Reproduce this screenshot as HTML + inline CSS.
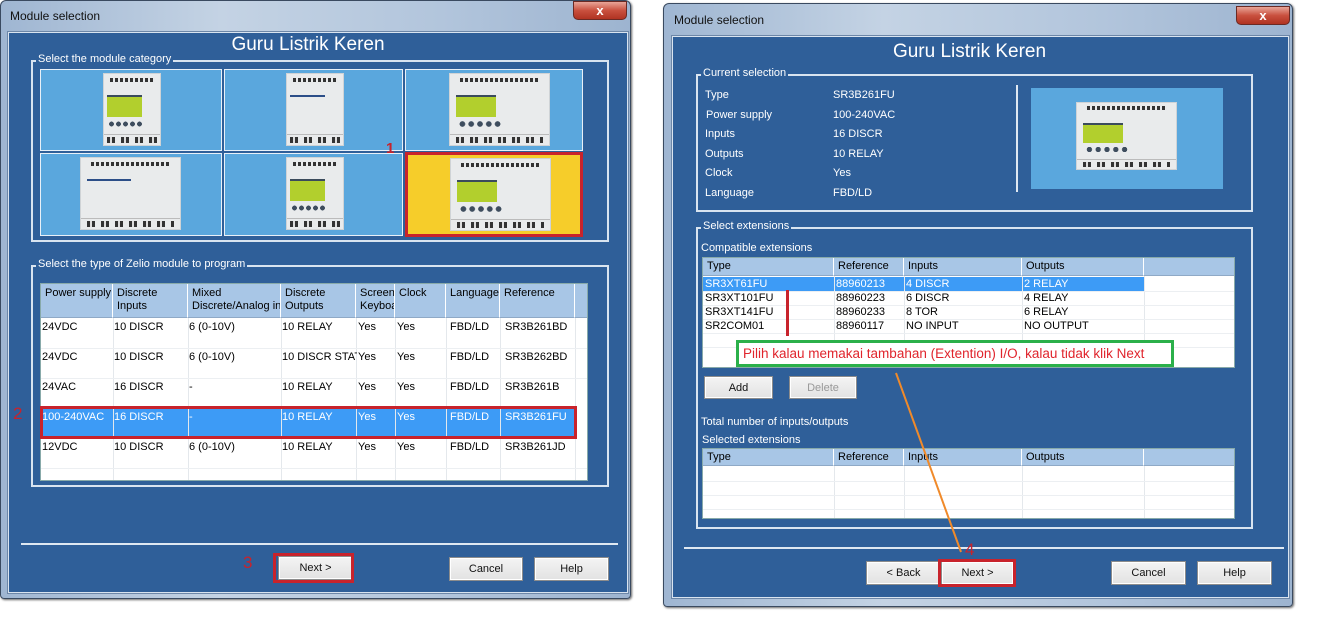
<!DOCTYPE html>
<html><head><meta charset="utf-8">
<style>
*{box-sizing:border-box;margin:0;padding:0}
body{width:1318px;height:636px;background:#fff;position:relative;overflow:hidden;font-family:"Liberation Sans",Arial,sans-serif;font-size:11px;color:#000}
.a{position:absolute}
.win{position:absolute;background:linear-gradient(90deg,#9fb6d2,#c4d3e4 35%,#b2c5dc 70%,#9db4d0);border:1px solid #3a4a60;border-radius:6px 6px 4px 4px;box-shadow:1px 1px 2px #666}
.panel{position:absolute;background:#2f5f99;border:1px solid #d9e4f0;outline:1px solid #6d87a8}
.wt{position:absolute;font-size:12px;color:#111}
.close{position:absolute;width:54px;height:19px;border:1px solid #6b2a24;border-radius:0 0 5px 5px;background:linear-gradient(#e8a598,#c9503e 50%,#b03322);color:#fff;font-weight:bold;text-align:center;font-size:13px;line-height:17px}
.h1{position:absolute;color:#fff;font-size:19px;text-align:center}
.grp{position:absolute;border:2px solid #d9e4f0}
.gl{position:absolute;color:#fff;font-size:11px;background:#2f5f99;padding:0 2px;top:-9px;left:3px;white-space:nowrap}
.tile{position:absolute;background:#5aa7dd;border:1px solid #e8f0f8}
.dev{position:absolute;background:#e9ebec;border:1px solid #cfd3d6}
.dev .dots{position:absolute;left:10%;top:5%;right:10%;height:6%;background:repeating-linear-gradient(90deg,#333 0 3px,transparent 3px 5px)}
.dev .lcd{position:absolute;left:6%;top:30%;width:62%;height:30%;background:#b2cf2d;border-top:2px solid #3b4b5c}
.dev .btns{position:absolute;left:8%;top:66%;width:62%;height:9%;background:radial-gradient(circle,#3e4d5e 50%,transparent 55%) 0 0/20% 100% repeat-x}
.dev .term{position:absolute;left:6%;right:6%;bottom:3%;height:8%;background:repeating-linear-gradient(90deg,#333 0 3px,#ddd 3px 5px,#333 5px 8px,transparent 8px 14px)}
.dev .strip{position:absolute;left:0;right:0;top:85%;height:1px;background:#bbb}
.tbl{position:absolute;background:#fff;border:1px solid #8aa;overflow:hidden}
.hd{position:absolute;background:#a8c6e6;border-right:1px solid #fff;border-bottom:1px solid #8fa9c6;padding:3px 4px;font-size:11px;line-height:13px;overflow:hidden;white-space:nowrap}
.c{position:absolute;font-size:11px;white-space:nowrap;overflow:hidden;line-height:14px}
.vl{position:absolute;width:1px;background:#e4e8ec}
.hl{position:absolute;height:1px;background:#eceff2}
.btn{position:absolute;background:linear-gradient(#f4f4f4,#e2e2e2);border:1px solid #8c8c8c;box-shadow:inset 0 0 0 1px #fff;text-align:center;font-size:11px;line-height:22px;color:#111}
.red{position:absolute;border:3px solid #c8232c}
.num{position:absolute;color:#c8232c;font-size:15px;font-weight:bold}
.w{color:#fff;position:absolute;font-size:11px}
</style></head><body>

<!-- LEFT WINDOW -->
<div class="win" style="left:0;top:0;width:631px;height:599px"></div>
<div class="wt" style="left:10px;top:9px">Module selection</div>
<div class="close" style="left:573px;top:1px">x</div>
<div class="panel" style="left:8px;top:32px;width:620px;height:561px"></div>
<div class="h1" style="left:8px;top:34px;width:600px">Guru Listrik Keren</div>

<div class="grp" style="left:31px;top:60px;width:578px;height:182px"><div class="gl">Select the module category</div></div>
<div class="tile" style="left:40px;top:69px;width:182px;height:82px"></div>
<div class="tile" style="left:224px;top:69px;width:179px;height:82px"></div>
<div class="tile" style="left:405px;top:69px;width:178px;height:82px"></div>
<div class="tile" style="left:40px;top:153px;width:182px;height:83px"></div>
<div class="tile" style="left:224px;top:153px;width:179px;height:83px"></div>
<div class="tile" style="left:405px;top:152px;width:178px;height:85px;background:#f6cd2a;border:3px solid #c8232c"></div>

<div class="dev" style="left:103px;top:73px;width:58px;height:73px"><div class="dots"></div><div class="lcd"></div><div class="btns"></div><div class="strip"></div><div class="term"></div></div>
<div class="dev" style="left:286px;top:73px;width:58px;height:73px"><div class="dots"></div><div class="lcd" style="background:#e9ebec;height:3%;border-top:2px solid #2c4e88"></div><div class="strip"></div><div class="term"></div></div>
<div class="dev" style="left:449px;top:73px;width:101px;height:73px"><div class="dots"></div><div class="lcd" style="width:40%"></div><div class="btns" style="width:45%"></div><div class="strip"></div><div class="term"></div></div>
<div class="dev" style="left:80px;top:157px;width:101px;height:73px"><div class="dots"></div><div class="lcd" style="background:#e9ebec;height:3%;width:45%;border-top:2px solid #2c4e88"></div><div class="strip"></div><div class="term"></div></div>
<div class="dev" style="left:286px;top:157px;width:58px;height:73px"><div class="dots"></div><div class="lcd"></div><div class="btns"></div><div class="strip"></div><div class="term"></div></div>
<div class="dev" style="left:450px;top:158px;width:101px;height:73px"><div class="dots"></div><div class="lcd" style="width:40%"></div><div class="btns" style="width:45%"></div><div class="strip"></div><div class="term"></div></div>
<div class="num" style="left:386px;top:140px">1</div>

<div class="grp" style="left:31px;top:265px;width:578px;height:222px"><div class="gl">Select the type of Zelio module to program</div></div>
<div class="tbl" style="left:40px;top:283px;width:548px;height:198px">
  <div class="hd" style="left:0;top:0;width:72px;height:34px">Power supply</div>
  <div class="hd" style="left:72px;top:0;width:75px;height:34px">Discrete<br>Inputs</div>
  <div class="hd" style="left:147px;top:0;width:93px;height:34px">Mixed<br>Discrete/Analog in</div>
  <div class="hd" style="left:240px;top:0;width:75px;height:34px">Discrete<br>Outputs</div>
  <div class="hd" style="left:315px;top:0;width:39px;height:34px">Screen<br>Keyboard</div>
  <div class="hd" style="left:354px;top:0;width:51px;height:34px">Clock</div>
  <div class="hd" style="left:405px;top:0;width:54px;height:34px">Language</div>
  <div class="hd" style="left:459px;top:0;width:75px;height:34px">Reference</div>
  <div class="hd" style="left:534px;top:0;width:14px;height:34px"></div>
  <div class="a" style="left:0;top:124px;width:534px;height:30px;background:#3d9bf6"></div>
  <div class="vl" style="left:72px;top:34px;height:164px"></div><div class="vl" style="left:147px;top:34px;height:164px"></div><div class="vl" style="left:240px;top:34px;height:164px"></div><div class="vl" style="left:315px;top:34px;height:164px"></div><div class="vl" style="left:354px;top:34px;height:164px"></div><div class="vl" style="left:405px;top:34px;height:164px"></div><div class="vl" style="left:459px;top:34px;height:164px"></div><div class="vl" style="left:534px;top:34px;height:164px"></div>
  <div class="hl" style="left:0;top:64px;width:548px"></div><div class="hl" style="left:0;top:94px;width:548px"></div><div class="hl" style="left:0;top:184px;width:548px"></div>
</div>
<div class="a" style="left:42px;top:320px;width:560px">
  <div class="c" style="left:0;top:0">24VDC</div><div class="c" style="left:72px;top:0">10 DISCR</div><div class="c" style="left:147px;top:0">6 (0-10V)</div><div class="c" style="left:240px;top:0">10 RELAY</div><div class="c" style="left:316px;top:0">Yes</div><div class="c" style="left:355px;top:0">Yes</div><div class="c" style="left:408px;top:0">FBD/LD</div><div class="c" style="left:463px;top:0">SR3B261BD</div>
  <div class="c" style="left:0;top:30px">24VDC</div><div class="c" style="left:72px;top:30px">10 DISCR</div><div class="c" style="left:147px;top:30px">6 (0-10V)</div><div class="c" style="left:240px;top:30px;width:75px">10 DISCR STAT</div><div class="c" style="left:316px;top:30px">Yes</div><div class="c" style="left:355px;top:30px">Yes</div><div class="c" style="left:408px;top:30px">FBD/LD</div><div class="c" style="left:463px;top:30px">SR3B262BD</div>
  <div class="c" style="left:0;top:60px">24VAC</div><div class="c" style="left:72px;top:60px">16 DISCR</div><div class="c" style="left:147px;top:60px">-</div><div class="c" style="left:240px;top:60px">10 RELAY</div><div class="c" style="left:316px;top:60px">Yes</div><div class="c" style="left:355px;top:60px">Yes</div><div class="c" style="left:408px;top:60px">FBD/LD</div><div class="c" style="left:463px;top:60px">SR3B261B</div>
  <div style="color:#fff"><div class="c" style="left:0;top:90px">100-240VAC</div><div class="c" style="left:72px;top:90px">16 DISCR</div><div class="c" style="left:147px;top:90px">-</div><div class="c" style="left:240px;top:90px">10 RELAY</div><div class="c" style="left:316px;top:90px">Yes</div><div class="c" style="left:355px;top:90px">Yes</div><div class="c" style="left:408px;top:90px">FBD/LD</div><div class="c" style="left:463px;top:90px">SR3B261FU</div></div>
  <div class="c" style="left:0;top:120px">12VDC</div><div class="c" style="left:72px;top:120px">10 DISCR</div><div class="c" style="left:147px;top:120px">6 (0-10V)</div><div class="c" style="left:240px;top:120px">10 RELAY</div><div class="c" style="left:316px;top:120px">Yes</div><div class="c" style="left:355px;top:120px">Yes</div><div class="c" style="left:408px;top:120px">FBD/LD</div><div class="c" style="left:463px;top:120px">SR3B261JD</div>
</div>
<div class="red" style="left:40px;top:406px;width:537px;height:33px"></div>
<div class="num" style="left:13px;top:404px;font-weight:normal;font-size:17px">2</div>

<div class="a" style="left:21px;top:543px;width:597px;height:2px;background:#dfe8f2"></div>
<div class="btn" style="left:278px;top:556px;width:75px;height:24px">Next &gt;</div>
<div class="red" style="left:273px;top:553px;width:81px;height:30px"></div>
<div class="btn" style="left:449px;top:557px;width:74px;height:24px">Cancel</div>
<div class="btn" style="left:534px;top:557px;width:75px;height:24px">Help</div>
<div class="num" style="left:243px;top:553px;font-weight:normal;font-size:17px">3</div>

<!-- RIGHT WINDOW -->
<div class="win" style="left:663px;top:3px;width:630px;height:604px"></div>
<div class="wt" style="left:674px;top:13px">Module selection</div>
<div class="close" style="left:1236px;top:6px">x</div>
<div class="panel" style="left:672px;top:36px;width:617px;height:562px"></div>
<div class="h1" style="left:672px;top:41px;width:595px">Guru Listrik Keren</div>

<div class="grp" style="left:696px;top:74px;width:557px;height:138px"><div class="gl">Current selection</div></div>
<div class="w" style="left:705px;top:89px">Type</div><div class="w" style="left:833px;top:89px">SR3B261FU</div>
<div class="w" style="left:706px;top:109px">Power supply</div><div class="w" style="left:833px;top:109px">100-240VAC</div>
<div class="w" style="left:705px;top:128px">Inputs</div><div class="w" style="left:833px;top:128px">16 DISCR</div>
<div class="w" style="left:705px;top:148px">Outputs</div><div class="w" style="left:833px;top:148px">10 RELAY</div>
<div class="w" style="left:705px;top:167px">Clock</div><div class="w" style="left:833px;top:167px">Yes</div>
<div class="w" style="left:705px;top:187px">Language</div><div class="w" style="left:833px;top:187px">FBD/LD</div>
<div class="a" style="left:1016px;top:85px;width:2px;height:107px;background:#dfe8f2"></div>
<div class="a" style="left:1031px;top:88px;width:192px;height:101px;background:#5aa7dd"></div>
<div class="dev" style="left:1076px;top:102px;width:101px;height:68px"><div class="dots"></div><div class="lcd" style="width:40%"></div><div class="btns" style="width:45%"></div><div class="strip"></div><div class="term"></div></div>

<div class="grp" style="left:696px;top:227px;width:557px;height:302px"><div class="gl">Select extensions</div></div>
<div class="w" style="left:701px;top:242px">Compatible extensions</div>
<div class="tbl" style="left:702px;top:257px;width:533px;height:111px">
  <div class="hd" style="left:0;top:0;width:131px;height:18px;padding-top:2px">Type</div>
  <div class="hd" style="left:131px;top:0;width:70px;height:18px;padding-top:2px">Reference</div>
  <div class="hd" style="left:201px;top:0;width:118px;height:18px;padding-top:2px">Inputs</div>
  <div class="hd" style="left:319px;top:0;width:122px;height:18px;padding-top:2px">Outputs</div>
  <div class="hd" style="left:441px;top:0;width:92px;height:18px"></div>
  <div class="a" style="left:0;top:19px;width:441px;height:14px;background:#3d9bf6"></div>
  <div class="vl" style="left:131px;top:18px;height:93px"></div><div class="vl" style="left:201px;top:18px;height:93px"></div><div class="vl" style="left:319px;top:18px;height:93px"></div><div class="vl" style="left:441px;top:18px;height:93px"></div>
  <div class="hl" style="left:0;top:33px;width:533px"></div><div class="hl" style="left:0;top:47px;width:533px"></div><div class="hl" style="left:0;top:61px;width:533px"></div><div class="hl" style="left:0;top:75px;width:533px"></div><div class="hl" style="left:0;top:89px;width:533px"></div>
  <div class="c" style="left:2px;top:19px;color:#fff">SR3XT61FU</div><div class="c" style="left:133px;top:19px;color:#fff">88960213</div><div class="c" style="left:203px;top:19px;color:#fff">4 DISCR</div><div class="c" style="left:321px;top:19px;color:#fff">2 RELAY</div>
  <div class="c" style="left:2px;top:33px">SR3XT101FU</div><div class="c" style="left:133px;top:33px">88960223</div><div class="c" style="left:203px;top:33px">6 DISCR</div><div class="c" style="left:321px;top:33px">4 RELAY</div>
  <div class="c" style="left:2px;top:47px">SR3XT141FU</div><div class="c" style="left:133px;top:47px">88960233</div><div class="c" style="left:203px;top:47px">8 TOR</div><div class="c" style="left:321px;top:47px">6 RELAY</div>
  <div class="c" style="left:2px;top:61px">SR2COM01</div><div class="c" style="left:133px;top:61px">88960117</div><div class="c" style="left:203px;top:61px">NO INPUT</div><div class="c" style="left:321px;top:61px">NO OUTPUT</div>
</div>
<div class="a" style="left:786px;top:290px;width:3px;height:46px;background:#c8232c"></div>
<div class="a" style="left:736px;top:340px;width:438px;height:27px;border:3px solid #2bb04a;background:#fff;color:#e0242c;font-size:13.5px;line-height:21px;padding-left:4px;white-space:nowrap">Pilih kalau memakai tambahan (Extention) I/O, kalau tidak klik Next</div>

<div class="btn" style="left:704px;top:376px;width:69px;height:23px">Add</div>
<div class="btn" style="left:789px;top:376px;width:68px;height:23px;color:#999">Delete</div>
<div class="w" style="left:701px;top:416px">Total number of inputs/outputs</div>
<div class="w" style="left:702px;top:434px">Selected extensions</div>
<div class="tbl" style="left:702px;top:448px;width:533px;height:71px">
  <div class="hd" style="left:0;top:0;width:131px;height:17px;padding-top:2px">Type</div>
  <div class="hd" style="left:131px;top:0;width:70px;height:17px;padding-top:2px">Reference</div>
  <div class="hd" style="left:201px;top:0;width:118px;height:17px;padding-top:2px">Inputs</div>
  <div class="hd" style="left:319px;top:0;width:122px;height:17px;padding-top:2px">Outputs</div>
  <div class="hd" style="left:441px;top:0;width:92px;height:17px"></div>
  <div class="vl" style="left:131px;top:17px;height:54px"></div><div class="vl" style="left:201px;top:17px;height:54px"></div><div class="vl" style="left:319px;top:17px;height:54px"></div><div class="vl" style="left:441px;top:17px;height:54px"></div>
  <div class="hl" style="left:0;top:32px;width:533px"></div><div class="hl" style="left:0;top:46px;width:533px"></div><div class="hl" style="left:0;top:60px;width:533px"></div>
</div>

<div class="a" style="left:684px;top:547px;width:600px;height:2px;background:#dfe8f2"></div>
<div class="btn" style="left:866px;top:561px;width:75px;height:24px">&lt; Back</div>
<div class="btn" style="left:941px;top:561px;width:73px;height:24px">Next &gt;</div>
<div class="red" style="left:938px;top:559px;width:78px;height:28px"></div>
<div class="btn" style="left:1111px;top:561px;width:75px;height:24px">Cancel</div>
<div class="btn" style="left:1197px;top:561px;width:75px;height:24px">Help</div>
<div class="num" style="left:965px;top:540px;font-weight:normal;font-size:17px">4</div>
<svg class="a" style="left:0;top:0" width="1318" height="636"><line x1="896" y1="373" x2="961" y2="552" stroke="#f08a2a" stroke-width="2"/></svg>
</body></html>
